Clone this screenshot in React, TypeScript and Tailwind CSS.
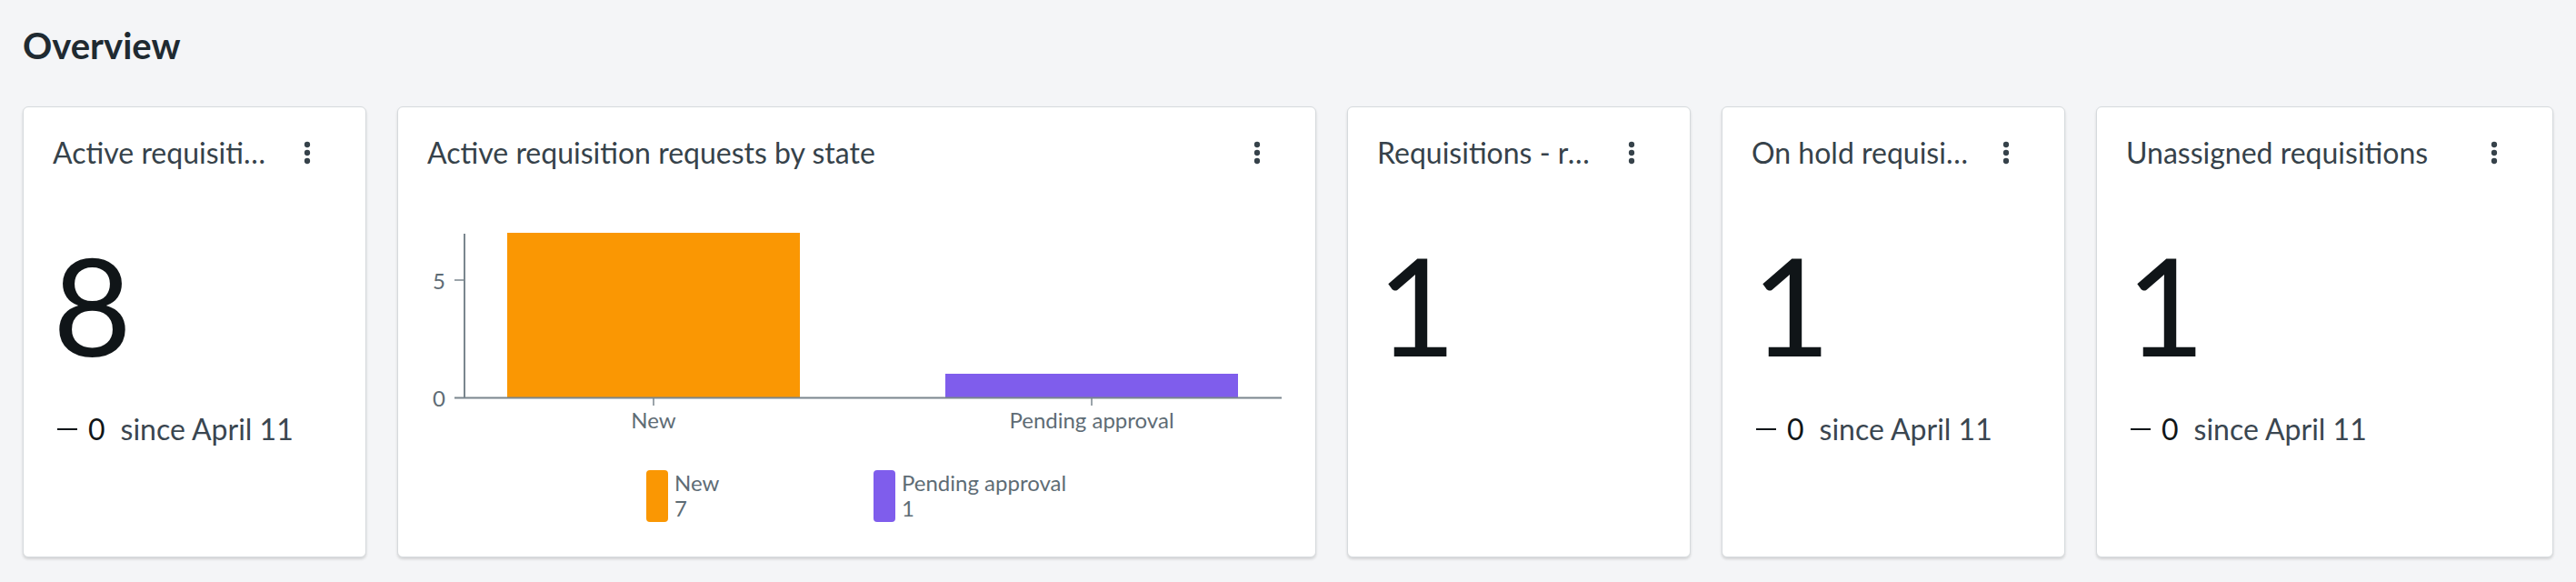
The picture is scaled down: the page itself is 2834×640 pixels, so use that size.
import React from 'react';

interface StatCardProps {
  title: string;
  value: string;
  delta?: string;
  since?: string;
  className?: string;
}

const Kebab = () => (
  <svg width="36" height="36" viewBox="0 0 24 24" fill="#36424a" aria-hidden="true">
    <circle cx="12" cy="6" r="2.1" />
    <circle cx="12" cy="12" r="2.1" />
    <circle cx="12" cy="18" r="2.1" />
  </svg>
);

const CardHeader = ({ title }: { title: string }) => (
  <div className="flex items-center h-[38px] gap-[16px]">
    <h3 className="flex-1 min-w-0 truncate text-[32px] leading-[38px] text-[#36424a]">{title}</h3>
    <button className="w-[36px] h-[36px] flex items-center justify-center shrink-0">
      <Kebab />
    </button>
  </div>
);

const cardBase =
  'flex flex-col h-[496px] bg-white border border-[#d6dadd] rounded-[6px] shadow-[0_2px_3px_rgba(0,0,0,0.14)] pt-[31px] pl-[32px] pr-[46px]';

const StatCard: React.FC<StatCardProps> = ({ title, value, delta, since, className = '' }) => (
  <div className={`${cardBase} ${className}`}>
    <CardHeader title={title} />
    <div className="mt-[72px] text-[150px] leading-none text-[#101518]">{value}</div>
    {delta !== undefined && (
      <div className="mt-[44px] flex items-center text-[32px] leading-[1.2]">
        <svg width="32" height="32" viewBox="0 0 32 32" aria-hidden="true">
          <rect x="5" y="15" width="22" height="2" fill="#101518" />
        </svg>
        <span className="ml-[7px] text-[#101518]">{delta}</span>
        <span className="ml-[17px] text-[#3a4650]">{since}</span>
      </div>
    )}
  </div>
);

const legend = [
  { label: 'New', count: 7, color: 'bg-[#fa9703]', width: 'w-[250px]' },
  { label: 'Pending approval', count: 1, color: 'bg-[#7f5dec]', width: '' },
];

const ChartCard = () => (
  <div className={`${cardBase} w-[1011px] shrink-0`}>
    <CardHeader title="Active requisition requests by state" />
    <svg width="931" height="300" className="overflow-visible" fontFamily="Lato, sans-serif">
      {/* bars */}
      <rect x="88" y="69" width="322" height="181" fill="#fa9703" />
      <rect x="570" y="224" width="322" height="26" fill="#7f5dec" />
      {/* axes */}
      <line x1="41" y1="70" x2="41" y2="251" stroke="#7a868e" strokeWidth="2" />
      <line x1="30" y1="250.5" x2="940" y2="250.5" stroke="#7a868e" strokeWidth="2" />
      <line x1="30" y1="121" x2="41" y2="121" stroke="#7a868e" strokeWidth="1.5" />
      <line x1="249" y1="250" x2="249" y2="259" stroke="#7a868e" strokeWidth="1.5" />
      <line x1="731" y1="250" x2="731" y2="259" stroke="#7a868e" strokeWidth="1.5" />
      {/* labels */}
      <text x="20" y="121" fontSize="24" fill="#5e6c75" textAnchor="end" dominantBaseline="central">5</text>
      <text x="20" y="250" fontSize="24" fill="#5e6c75" textAnchor="end" dominantBaseline="central">0</text>
      <text x="249" y="284" fontSize="24" fill="#5e6c75" textAnchor="middle">New</text>
      <text x="731" y="284" fontSize="24" fill="#5e6c75" textAnchor="middle">Pending approval</text>
    </svg>
    <div className="mt-[30px] flex pl-[241px]">
      {legend.map((item) => (
        <div key={item.label} className={`flex ${item.width}`}>
          <div className={`w-[24px] h-[57px] rounded-[4px] ${item.color}`} />
          <div className="ml-[7px] text-[24px] leading-[28px] text-[#5e6c75]">
            <div>{item.label}</div>
            <div>{item.count}</div>
          </div>
        </div>
      ))}
    </div>
  </div>
);

export default function App() {
  return (
    <div className="min-h-screen bg-[#f4f5f7] px-[25px] pt-[26px] font-['Lato',sans-serif]">
      <h2 className="text-[40px] leading-[48px] font-bold text-[#1f2a31]">Overview</h2>
      <div className="mt-[43px] flex gap-[34px]">
        <StatCard className="w-[378px] shrink-0" title="Active requisition requests" value="8" delta="0" since="since April 11" />
        <ChartCard />
        <StatCard className="w-[378px] shrink-0" title="Requisitions - rejected" value="1" />
        <StatCard className="w-[378px] shrink-0" title="On hold requisitions" value="1" delta="0" since="since April 11" />
        <StatCard className="flex-1 min-w-0" title="Unassigned requisitions" value="1" delta="0" since="since April 11" />
      </div>
    </div>
  );
}
